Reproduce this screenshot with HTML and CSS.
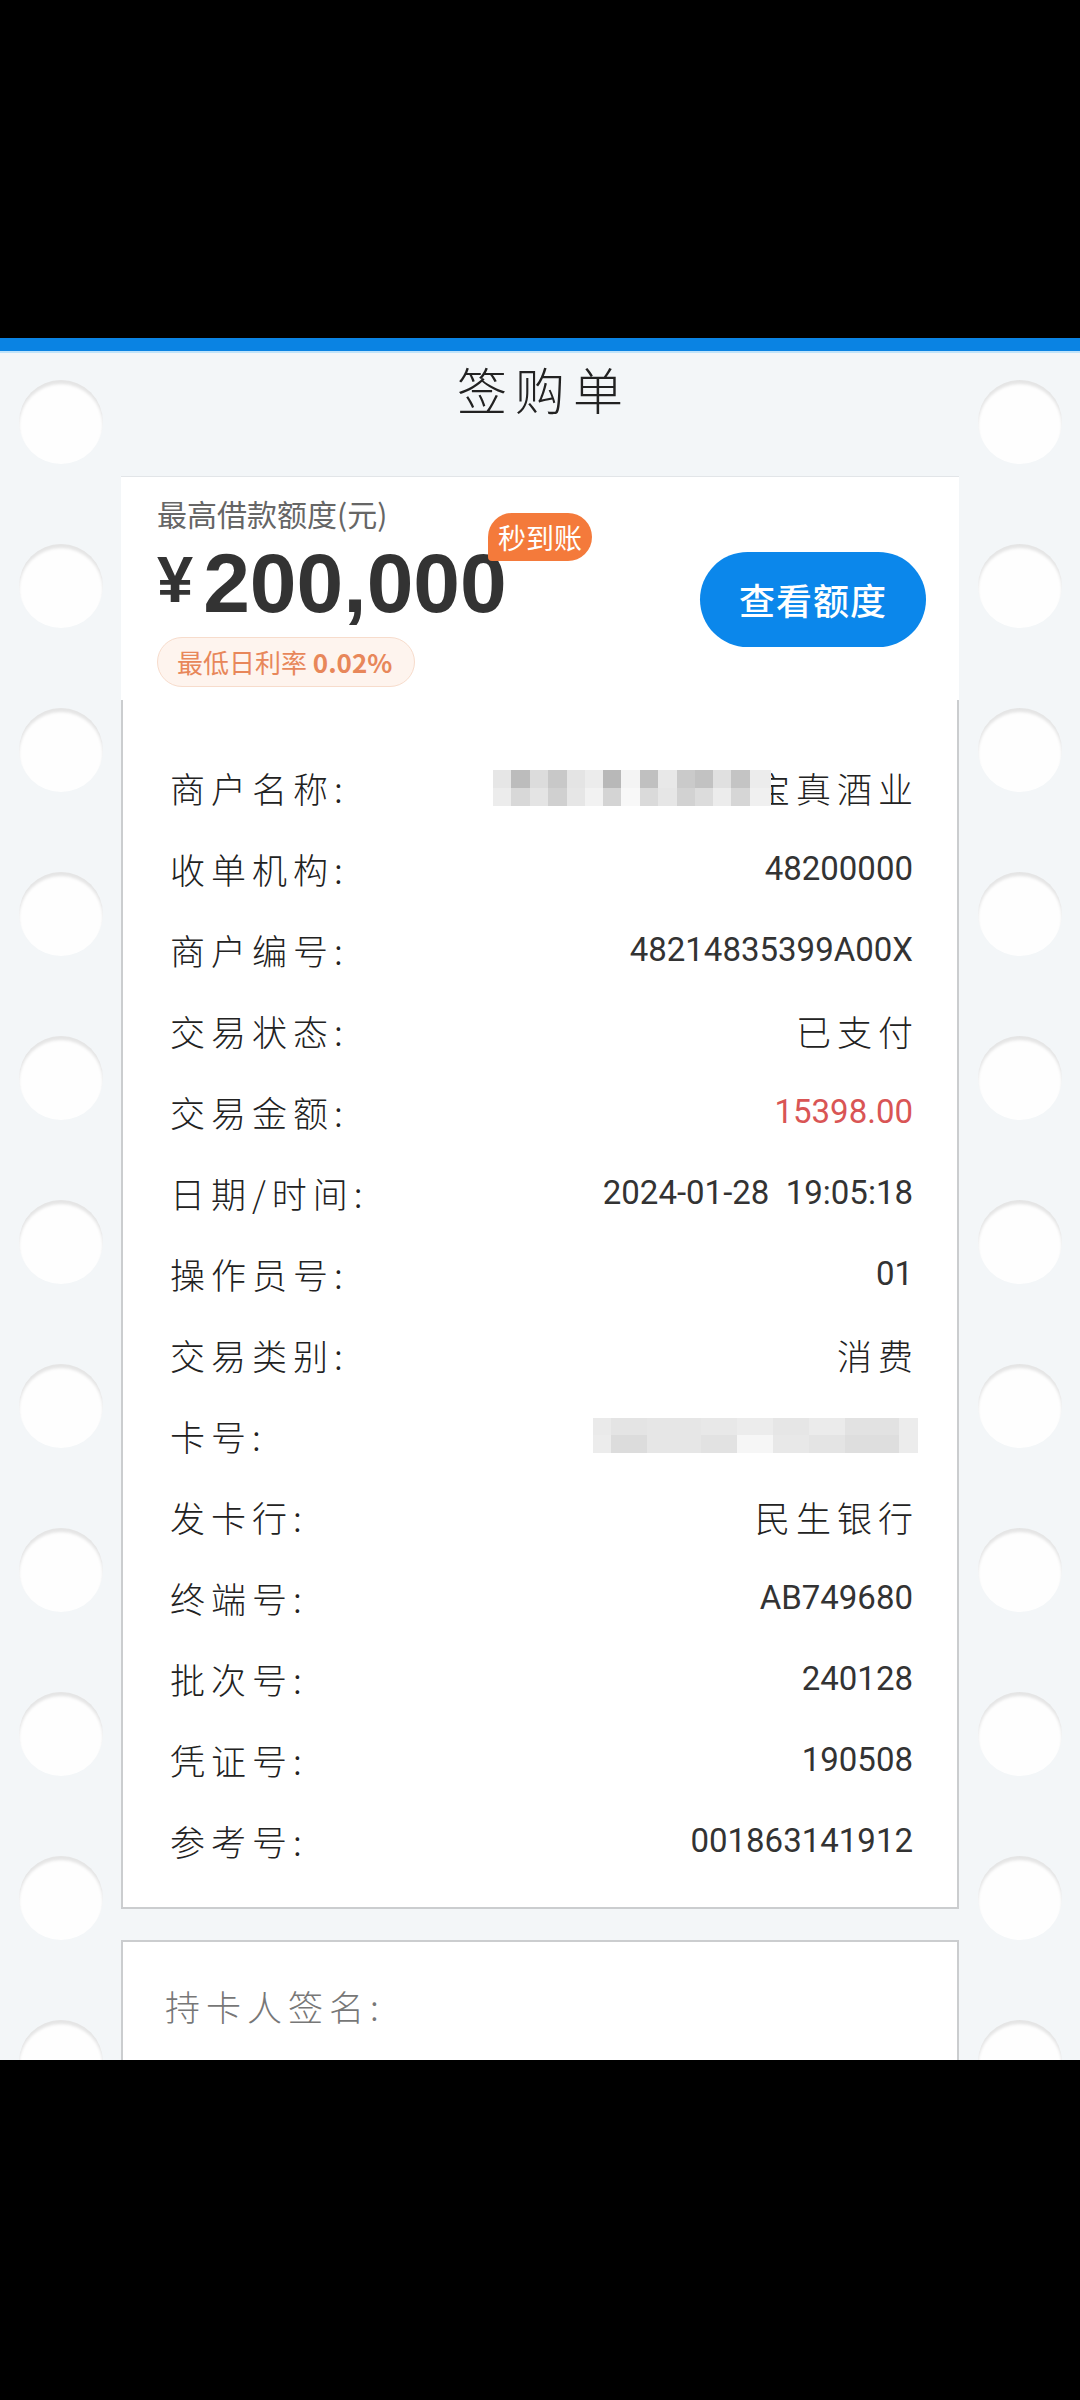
FILE: index.html
```html
<!DOCTYPE html>
<html lang="zh-CN">
<head>
<meta charset="utf-8">
<title>签购单</title>
<link rel="stylesheet" href="styles.css">
</head>
<body>
<div class="status"></div>
<div class="topline"></div>

<div class="page">
  <div class="rail">
    <i class="hole"></i><i class="hole"></i><i class="hole"></i><i class="hole"></i>
    <i class="hole"></i><i class="hole"></i><i class="hole"></i><i class="hole"></i>
    <i class="hole"></i><i class="hole"></i><i class="hole"></i>
  </div>

  <div class="sheet">
    <h1 class="title">签购单</h1>

    <div class="ad">
      <div class="ad-info">
        <div class="ad-label">最高借款额度(元)</div>
        <div class="ad-amount"><span class="yen">¥</span>200,000</div>
        <div class="ad-rate">最低日利率 <b>0.02%</b></div>
      </div>
      <span class="ad-badge">秒到账</span>
      <a class="ad-btn" href="#">查看额度</a>
    </div>

    <div class="receipt">
      <div class="row"><span class="k">商户名称:</span><span class="v cn shop">宝真酒业<i class="mosaic-shop"></i></span></div>
      <div class="row"><span class="k">收单机构:</span><span class="v">48200000</span></div>
      <div class="row"><span class="k">商户编号:</span><span class="v">48214835399A00X</span></div>
      <div class="row"><span class="k">交易状态:</span><span class="v cn">已支付</span></div>
      <div class="row"><span class="k">交易金额:</span><span class="v red">15398.00</span></div>
      <div class="row"><span class="k">日期/时间:</span><span class="v">2024-01-28&nbsp;&nbsp;19:05:18</span></div>
      <div class="row"><span class="k">操作员号:</span><span class="v">01</span></div>
      <div class="row"><span class="k">交易类别:</span><span class="v cn">消费</span></div>
      <div class="row"><span class="k">卡号:</span><span class="mosaic-card"></span></div>
      <div class="row"><span class="k">发卡行:</span><span class="v cn">民生银行</span></div>
      <div class="row"><span class="k">终端号:</span><span class="v">AB749680</span></div>
      <div class="row"><span class="k">批次号:</span><span class="v">240128</span></div>
      <div class="row"><span class="k">凭证号:</span><span class="v">190508</span></div>
      <div class="row"><span class="k">参考号:</span><span class="v">001863141912</span></div>
    </div>

    <div class="sign"><span>持卡人签名:</span></div>
  </div>

  <div class="rail">
    <i class="hole"></i><i class="hole"></i><i class="hole"></i><i class="hole"></i>
    <i class="hole"></i><i class="hole"></i><i class="hole"></i><i class="hole"></i>
    <i class="hole"></i><i class="hole"></i><i class="hole"></i>
  </div>
</div>

<div class="navbar"></div>
</body>
</html>
```

FILE: styles.css
```css
body{
	margin:0;
	background:#f3f6f8;
	font-family:"Noto Sans CJK SC", "Noto Sans", sans-serif;
}
.status{
	height:338px;
	background:#000;
}
.topline{
	height:13px;
	background:#0a83e3;
	border-bottom:2px solid #bfe3fa;
}
.navbar{
	height:340px;
	background:#000;
}

.page{
	display:grid;
	grid-template-columns:121px 838px 121px;
	height:1707px;
	overflow:hidden;
}
.rail{
	display:flex;
	flex-direction:column;
	align-items:center;
	gap:80px;
	padding-top:27px;
}
.hole{
	flex-shrink:0;
	width:84px;
	height:84px;
	border-radius:50%;
	background:#fefefe;
	box-shadow:inset 0 4px 3px rgba(0,0,0,0.1);
}

.title{
	margin:0 0 53px;
	font-size:50px;
	line-height:70px;
	font-weight:300;
	letter-spacing:8px;
	padding-left:8px;
	text-align:center;
	color:#222;
}

/* 广告卡片 */
.ad{
	position:relative;
	display:flex;
	justify-content:space-between;
	align-items:flex-start;
	height:224px;
	box-sizing:border-box;
	padding:18px 33px 0 36px;
	background:#fff;
	border-top:1px solid #e2e5e8;
}
.ad-label{
	font-size:30px;
	line-height:36px;
	color:#666;
}
.ad-amount{
	margin-top:12px;
	font-family:"Liberation Sans", Arial, sans-serif;
	font-weight:700;
	font-size:84px;
	line-height:80px;
	color:#333;
}
.yen{
	font-size:65px;
	line-height:65px;
	margin-right:10px;
	vertical-align:10px;
}
.ad-rate{
	display:inline-block;
	margin-top:14px;
	height:50px;
	box-sizing:border-box;
	padding:0 22px 0 19px;
	border:1.5px solid #f7dccc;
	border-radius:25px;
	background:#fef4ee;
	color:#e8875a;
	font-size:26px;
	line-height:47px;
}
.ad-rate b{
	font-weight:700;
}
.ad-badge{
	position:absolute;
	left:367px;
	top:36px;
	width:104px;
	height:48px;
	border-radius:24px 24px 24px 4px;
	background:#f47a3b;
	color:#fff;
	font-size:28px;
	line-height:48px;
	text-align:center;
}
.ad-btn{
	display:block;
	align-self:center;
	margin-top:4px;
	width:226px;
	height:95px;
	border-radius:48px;
	background:#0b87eb;
	color:#fff;
	font-size:36px;
	font-weight:500;
	line-height:95px;
	text-align:center;
	letter-spacing:1px;
	text-decoration:none;
}

/* 签购单内容 */
.receipt{
	background:#fff;
	border:2px solid #cbcdcf;
	border-top:none;
	padding:47px 44px 26px 47px;
}
.row{
	display:flex;
	justify-content:space-between;
	align-items:center;
	height:81px;
}
.k{
	font-size:35px;
	font-weight:300;
	letter-spacing:6px;
	color:#222;
}
.v{
	font-family:Roboto, "Noto Sans", sans-serif;
	font-size:33px;
	color:#333;
}
.v.cn{
	font-family:"Noto Sans CJK SC", sans-serif;
	font-size:35px;
	font-weight:300;
	letter-spacing:6px;
	margin-right:-6px;
	color:#222;
}
.v.red{
	color:#d95555;
}
.shop{
	position:relative;
}
.mosaic-shop{
	position:absolute;
	right:148px;
	top:50%;
	margin-top:-18px;
	width:278px;
	height:36px;
	background:
		linear-gradient(90deg,#e6e6e6 0 18px,#bcbcbc 18px 37px,#dcdcdc 37px 55px,#c8c8c8 55px 74px,#e4e4e4 74px 92px,#ececec 92px 110px,#b8b8b8 110px 128px,#f4f4f4 128px 147px,#c0c0c0 147px 165px,#e8e8e8 165px 184px,#cacaca 184px 202px,#c2c2c2 202px 220px,#e0e0e0 220px 238px,#c4c4c4 238px 257px,#ececec 257px) top/100% 18px no-repeat,
		linear-gradient(90deg,#ececec 0 18px,#d8d8d8 18px 37px,#e4e4e4 37px 55px,#d0d0d0 55px 74px,#e6e6e6 74px 92px,#f2f2f2 92px 110px,#d4d4d4 110px 128px,#f8f8f8 128px 147px,#dadada 147px 165px,#e6e6e6 165px 184px,#d2d2d2 184px 202px,#dcdcdc 202px 220px,#ececec 220px 238px,#d6d6d6 238px 257px,#f0f0f0 257px) bottom/100% 18px no-repeat;
}
.mosaic-card{
	display:block;
	width:325px;
	height:35px;
	margin-right:-5px;
	background:
		linear-gradient(90deg,#eaeaea 0 18px,#e4e4e4 18px 54px,#e6e6e6 54px 108px,#e8e8e8 108px 144px,#ececec 144px 180px,#e6e6e6 180px 216px,#ebebeb 216px 252px,#e2e2e2 252px 306px,#ececec 306px) top/100% 17px no-repeat,
		linear-gradient(90deg,#ececec 0 18px,#dcdcdc 18px 54px,#e6e6e6 54px 108px,#e2e2e2 108px 144px,#f6f6f6 144px 180px,#e8e8e8 180px 216px,#e4e4e4 216px 252px,#dedede 252px 306px,#ececec 306px) bottom/100% 18px no-repeat;
}

.sign{
	margin-top:31px;
	height:200px;
	box-sizing:border-box;
	padding:44px 0 0 42px;
	background:#fff;
	border:2px solid #cbcdcf;
	border-bottom:none;
}
.sign span{
	font-size:35px;
	line-height:40px;
	font-weight:300;
	letter-spacing:6px;
	color:#777;
}
```
